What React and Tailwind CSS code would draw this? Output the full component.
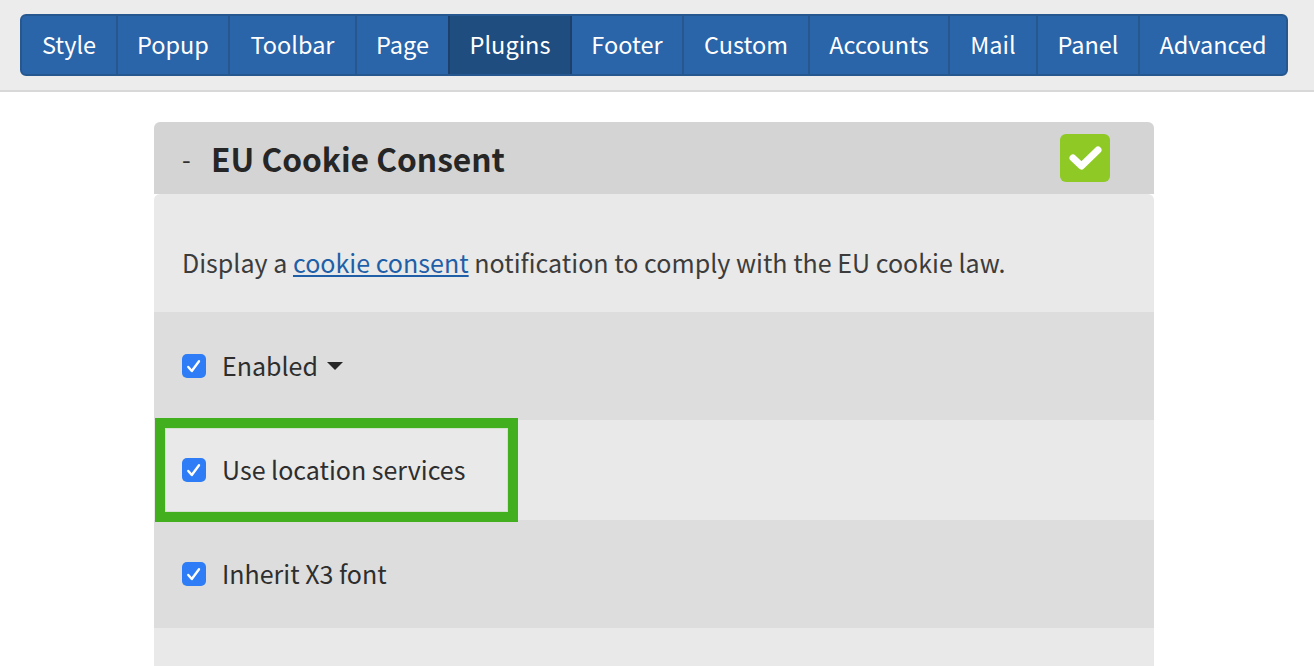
const tabs = [
  { name: "Style", width: "w-[96px]" },
  { name: "Popup", width: "w-[112px]" },
  { name: "Toolbar", width: "w-[127px]" },
  { name: "Page", width: "w-[91px]" },
  { name: "Plugins", width: "w-[124px]", active: true },
  { name: "Footer", width: "w-[112px]" },
  { name: "Custom", width: "w-[126px]" },
  { name: "Accounts", width: "w-[140px]" },
  { name: "Mail", width: "w-[88px]" },
  { name: "Panel", width: "w-[102px]" },
  { name: "Advanced", width: "w-[146px]", last: true },
];

function Checkbox() {
  return (
    <span className="h-6 w-6 shrink-0 rounded-[5px] bg-[#2f7df6]">
      <svg width="24" height="24" viewBox="0 0 24 24" fill="none" stroke="#fff" strokeWidth="2.4" strokeLinecap="round" strokeLinejoin="round">
        <path d="M6.3 13L9.8 17L17 7.3" />
      </svg>
    </span>
  );
}

function Row({ label, className, children }) {
  return (
    <div className={`flex items-center pl-7 ${className}`}>
      <Checkbox />
      <span className="ml-4 pb-[2px] text-[25px] leading-8 text-[#2e2e2e]">{label}</span>
      {children}
    </div>
  );
}

export default function App() {
  return (
    <div className="h-[666px] overflow-hidden bg-white font-['Noto_Sans_CJK_SC','Lato',sans-serif]">
      <header className="h-[92px] border-b-2 border-[#d8d8d8] bg-[#ececec] pl-5 pr-[26px] pt-[14px]">
        <nav className="flex h-[62px] overflow-hidden rounded-md border-2 border-[#26588f] bg-[#2a64a9]">
          {tabs.map((tab) => (
            <a
              key={tab.name}
              className={`flex shrink-0 items-center justify-center pb-[2px] text-[23.5px] leading-8 text-white ${tab.width} ${
                tab.active
                  ? "-my-[2px] border-2 border-[#1c3f6c] bg-[#204d80]"
                  : tab.last || tab.name === "Page"
                    ? ""
                    : "border-r-2 border-[#26588f]"
              }`}
            >
              {tab.name}
            </a>
          ))}
        </nav>
      </header>

      <div className="pr-[6px]">
        <main className="relative mx-auto mt-[30px] w-[1000px]">
          <div className="flex h-[72px] items-center rounded-t-md bg-[#d4d4d4] pl-7 pr-11">
            <span className="w-[30px] text-[25px] leading-8 text-[#2e2e2e]">-</span>
            <h2 className="-ml-px text-[31.7px] font-semibold leading-10 text-[#262626]">EU Cookie Consent</h2>
            <span className="ml-auto flex h-12 w-[50px] items-center justify-center rounded-md bg-[#8ec926]">
              <svg width="34" height="26" viewBox="0 0 34 26" fill="none" stroke="#fff" strokeWidth="7" strokeLinecap="round" strokeLinejoin="round">
                <path d="M5 13L13.5 21L30 5" />
              </svg>
            </span>
          </div>

          <div className="flex h-[118px] items-center rounded-t-md bg-[#e9e9e9] pl-7 pt-[17px]">
            <p className="text-[25.06px] leading-8 text-[#3c3c3c]">
              Display a <a className="text-[#1f5fa8] underline">cookie consent</a> notification to comply with the EU cookie law.
            </p>
          </div>

          <Row label="Enabled" className="h-[108px] bg-[#dddddd]">
            <span className="ml-[9px] h-0 w-0 border-x-[8px] border-t-[8px] border-x-transparent border-t-[#262626]" />
          </Row>
          <Row label="Use location services" className="h-[100px] bg-[#e9e9e9]" />
          <Row label="Inherit X3 font" className="h-[108px] bg-[#dddddd]" />
          <div className="h-[60px] bg-[#e9e9e9]" />

          <div className="absolute left-px top-[296px] h-[104px] w-[363px] border-[10px] border-[#42b01e] shadow-[inset_0_0_0_1px_#d3e0cc]" />
        </main>
      </div>
    </div>
  );
}
